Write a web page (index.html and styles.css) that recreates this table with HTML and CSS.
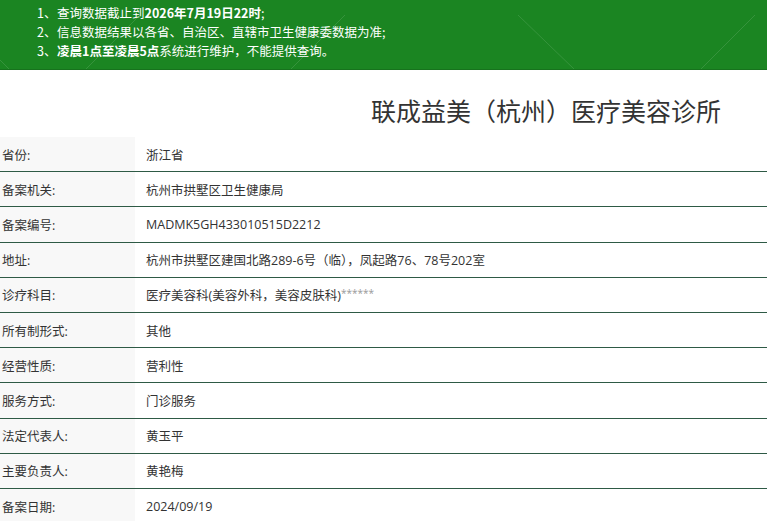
FILE: index.html
```html
<!DOCTYPE html>
<html lang="zh-CN">
<head>
<meta charset="utf-8">
<title>联成益美（杭州）医疗美容诊所</title>
<link rel="stylesheet" href="styles.css">
</head>
<body>
<div class="banner">
  <svg class="bg-lines" width="767" height="70" viewBox="0 0 767 70" aria-hidden="true">
    <line x1="85" y1="70" x2="140" y2="15" />
    <line x1="518" y1="15" x2="575" y2="70" />
    <line x1="290" y1="70" x2="345" y2="15" />
    <line x1="700" y1="70" x2="755" y2="15" />
    <line x1="-5" y1="55" x2="10" y2="70" />
  </svg>
  <ol class="notes">
    <li><span class="num">1、</span>查询数据截止到<b>2026年7月19日22时</b>;</li>
    <li><span class="num">2、</span>信息数据结果以各省、自治区、直辖市卫生健康委数据为准;</li>
    <li><span class="num">3、</span><b>凌晨1点至凌晨5点</b>系统进行维护，不能提供查询。</li>
  </ol>
</div>
<h1 class="title">联成益美（杭州）医疗美容诊所</h1>
<div class="table">
  <div class="row"><div class="label">省份:</div><div class="value">浙江省</div></div>
  <div class="row"><div class="label">备案机关:</div><div class="value">杭州市拱墅区卫生健康局</div></div>
  <div class="row"><div class="label">备案编号:</div><div class="value">MADMK5GH433010515D2212</div></div>
  <div class="row"><div class="label">地址:</div><div class="value">杭州市拱墅区建国北路289-6号（临），凤起路76、78号202室</div></div>
  <div class="row"><div class="label">诊疗科目:</div><div class="value">医疗美容科(美容外科，美容皮肤科)<span class="stars">******</span></div></div>
  <div class="row"><div class="label">所有制形式:</div><div class="value">其他</div></div>
  <div class="row"><div class="label">经营性质:</div><div class="value">营利性</div></div>
  <div class="row"><div class="label">服务方式:</div><div class="value">门诊服务</div></div>
  <div class="row"><div class="label">法定代表人:</div><div class="value">黄玉平</div></div>
  <div class="row"><div class="label">主要负责人:</div><div class="value">黄艳梅</div></div>
  <div class="row last"><div class="label">备案日期:</div><div class="value">2024/09/19</div></div>
</div>
</body>
</html>
```

FILE: styles.css
```css
html, body {
  margin: 0;
  padding: 0;
  background: #ffffff;
}
body {
  font-family: "Open Sans", "Noto Sans CJK SC", sans-serif;
  color: #333333;
  width: 767px;
  overflow: hidden;
}
.banner {
  position: relative;
  height: 69px;
  background: #1b8522;
  border-bottom: 1px solid #17721d;
  overflow: hidden;
}
.bg-lines {
  position: absolute;
  left: 0;
  top: 0;
}
.bg-lines line {
  stroke: rgba(255, 255, 255, 0.12);
  stroke-width: 1;
}
.notes {
  position: relative;
  list-style: none;
  margin: 0;
  padding: 3px 0 0 37px;
  color: #ffffff;
  font-size: 12.5px;
  line-height: 19px;
  font-family: "Noto Sans CJK SC", sans-serif;
}
.notes .num {
  display: inline-block;
  width: 20px;
}
.notes b {
  font-weight: 700;
}
.title {
  margin: 0;
  height: 67px;
  box-sizing: border-box;
  padding: 23px 46px 0 0;
  text-align: right;
  font-size: 25px;
  line-height: 34px;
  font-weight: 400;
  color: #333333;
  font-family: "Noto Sans CJK SC", sans-serif;
}
.table {
  display: flex;
  flex-direction: column;
}
.row {
  display: grid;
  grid-template-columns: 135px 1fr;
  height: 35.2px;
  border-bottom: 1px solid #2e5a45;
  box-sizing: border-box;
  font-size: 12.5px;
}
.row.last {
  border-bottom: none;
}
.label {
  background: #f8f8f8;
  padding-left: 2px;
  display: flex;
  align-items: center;
  color: #333333;
}
.value {
  padding-left: 11px;
  display: flex;
  align-items: center;
  color: #333333;
  white-space: nowrap;
}
.stars {
  color: #999999;
  font-size: 10px;
  position: relative;
  top: -2px;
}
```
